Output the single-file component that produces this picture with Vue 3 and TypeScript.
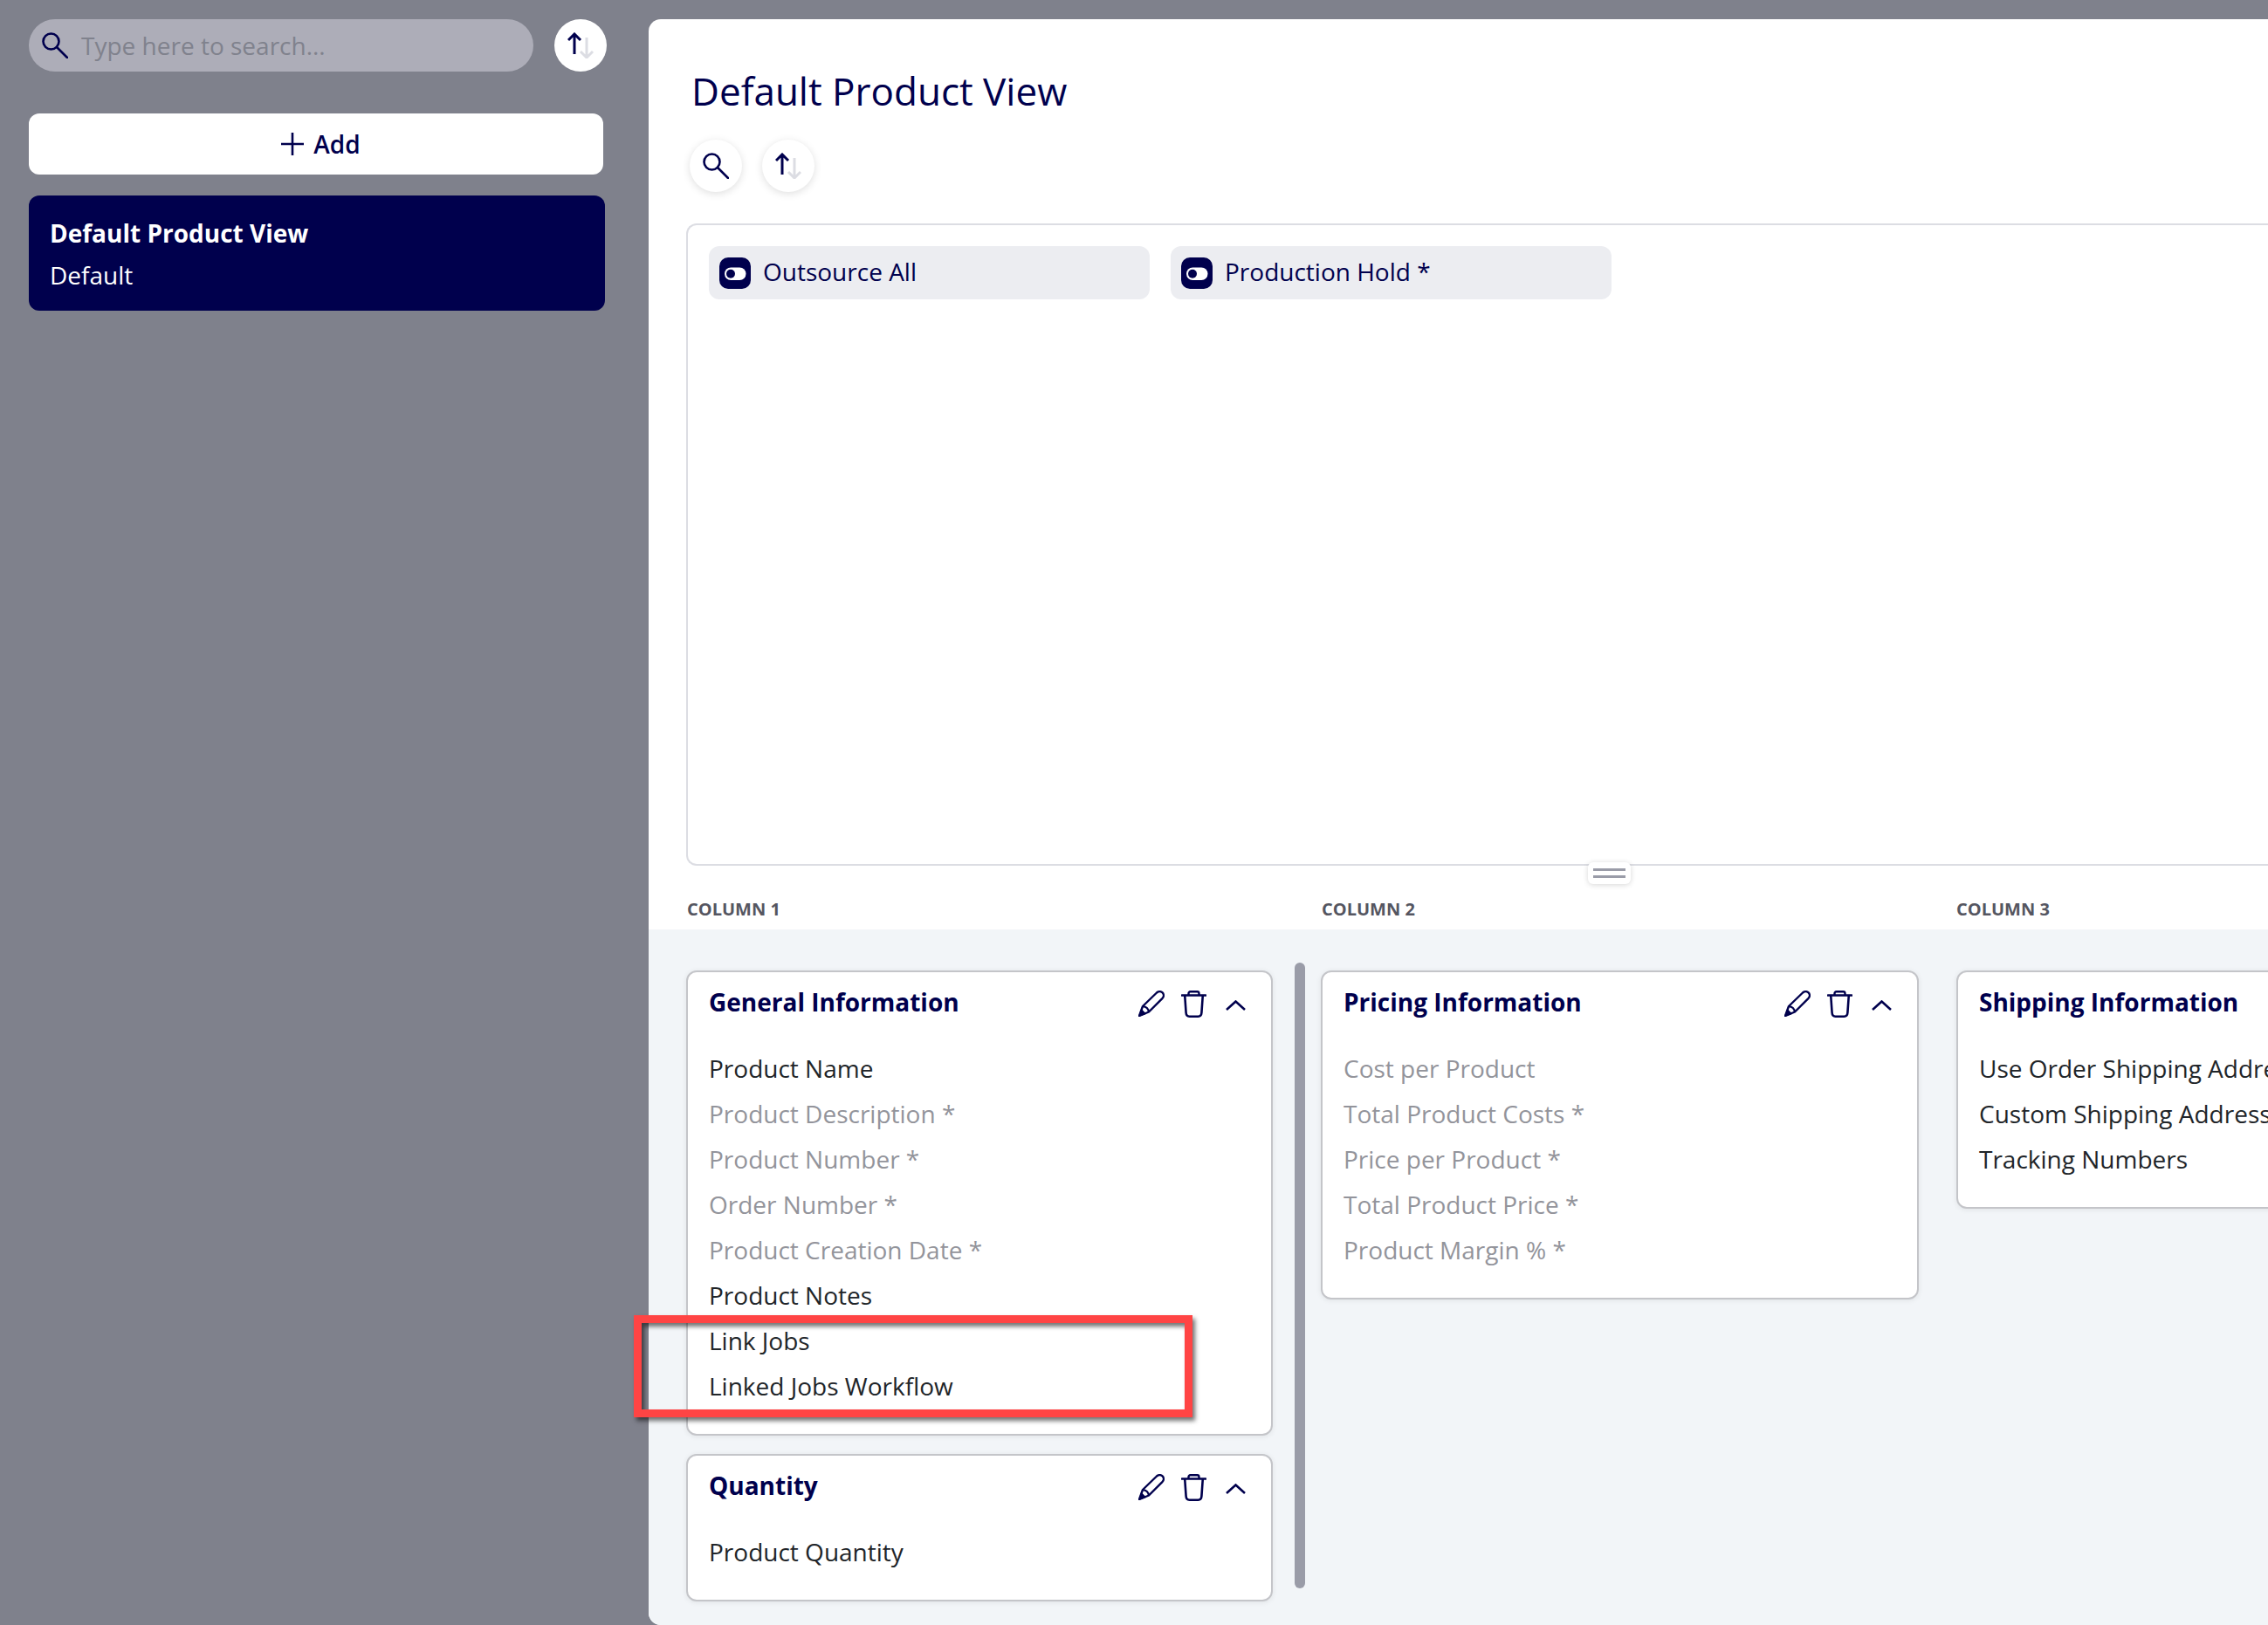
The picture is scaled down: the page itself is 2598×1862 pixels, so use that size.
<script setup lang="ts">
interface Field {
  label: string
  muted?: boolean
}

interface Section {
  title: string
  fields: Field[]
}

const toggles = ['Outsource All', 'Production Hold *']

const columns: { name: string; sections: Section[] }[] = [
  {
    name: 'COLUMN 1',
    sections: [
      {
        title: 'General Information',
        fields: [
          { label: 'Product Name' },
          { label: 'Product Description *', muted: true },
          { label: 'Product Number *', muted: true },
          { label: 'Order Number *', muted: true },
          { label: 'Product Creation Date *', muted: true },
          { label: 'Product Notes' },
          { label: 'Link Jobs' },
          { label: 'Linked Jobs Workflow' },
        ],
      },
      {
        title: 'Quantity',
        fields: [{ label: 'Product Quantity' }],
      },
    ],
  },
  {
    name: 'COLUMN 2',
    sections: [
      {
        title: 'Pricing Information',
        fields: [
          { label: 'Cost per Product', muted: true },
          { label: 'Total Product Costs *', muted: true },
          { label: 'Price per Product *', muted: true },
          { label: 'Total Product Price *', muted: true },
          { label: 'Product Margin % *', muted: true },
        ],
      },
    ],
  },
  {
    name: 'COLUMN 3',
    sections: [
      {
        title: 'Shipping Information',
        fields: [
          { label: 'Use Order Shipping Address' },
          { label: 'Custom Shipping Address' },
          { label: 'Tracking Numbers' },
        ],
      },
    ],
  },
]
</script>

<template>
  <div class="page">
    <aside class="sidebar">
      <div class="search-row">
        <div class="search">
          <svg class="search-icon" viewBox="0 0 30 30" fill="none">
            <circle cx="10.5" cy="10.5" r="9" stroke="#00004d" stroke-width="2.6" />
            <path d="M17 17 L29 29" stroke="#00004d" stroke-width="2.6" stroke-linecap="round" />
          </svg>
          <span class="search-text">Type here to search...</span>
        </div>
        <button class="round-btn">
          <svg class="sort-icon" viewBox="0 0 30 30" fill="none">
            <path d="M22 6 V29 M15 22 L22 29 L29 22" stroke="#dcdde3" stroke-width="3" />
            <path d="M8 25 V2 M1 9 L8 2 L15 9" stroke="#00004d" stroke-width="3" />
          </svg>
        </button>
      </div>
      <button class="add-btn">
        <svg class="plus" viewBox="0 0 28 28" fill="none">
          <path d="M14 1 V27 M1 14 H27" stroke="#00004d" stroke-width="2.6" />
        </svg>
        Add
      </button>
      <div class="view-card">
        <div class="view-name">Default Product View</div>
        <div class="view-sub">Default</div>
      </div>
    </aside>

    <main class="panel">
      <div class="panel-top">
        <h1 class="title">Default Product View</h1>
        <div class="tools">
          <button class="tool-btn">
            <svg class="search-icon" viewBox="0 0 30 30" fill="none">
              <circle cx="10.5" cy="10.5" r="9" stroke="#00004d" stroke-width="2.6" />
              <path d="M17 17 L29 29" stroke="#00004d" stroke-width="2.6" stroke-linecap="round" />
            </svg>
          </button>
          <button class="tool-btn">
            <svg class="sort-icon" viewBox="0 0 30 30" fill="none">
              <path d="M22 6 V29 M15 22 L22 29 L29 22" stroke="#dcdde3" stroke-width="3" />
              <path d="M8 25 V2 M1 9 L8 2 L15 9" stroke="#00004d" stroke-width="3" />
            </svg>
          </button>
        </div>
        <div class="toggle-box">
          <div v-for="t in toggles" :key="t" class="chip">
            <svg class="toggle" viewBox="0 0 36 36">
              <rect width="36" height="36" rx="10" fill="#00004d" />
              <rect x="6" y="11.5" width="24.5" height="14.5" rx="7.25" fill="#fff" />
              <circle cx="13" cy="18.7" r="5" fill="#00004d" />
            </svg>
            <span class="chip-text">{{ t }}</span>
          </div>
        </div>
        <div class="handle"><i></i><i></i></div>
      </div>

      <div class="col-labels">
        <div v-for="c in columns" :key="c.name" class="col-label">{{ c.name }}</div>
      </div>

      <div class="board">
        <div v-for="(c, i) in columns" :key="c.name" class="column" :class="`column-${i + 1}`">
          <section v-for="s in c.sections" :key="s.title" class="section">
            <header class="section-head">
              <h2>{{ s.title }}</h2>
              <div class="actions">
                <svg class="act-pen" viewBox="0 0 30 30" fill="none">
                  <path d="M1 29 L5 18 L21 2.5 C23 0.7 25.8 0.7 27.6 2.4 C29.4 4.2 29.3 7 27.6 8.8 L12 24.5 Z" stroke="#00004d" stroke-width="2.4" stroke-linejoin="round" />
                  <path d="M1 29 L3.5 22 L8 26.5 Z" fill="#00004d" stroke="#00004d" stroke-width="1.4" stroke-linejoin="round" />
                  <path d="M5 18 C8.5 18.5 11.5 21 12 24.5" stroke="#00004d" stroke-width="2.2" />
                </svg>
                <svg class="act-bin" viewBox="0 0 29 31" fill="none">
                  <path d="M1 5.5 H28" stroke="#00004d" stroke-width="2.6" stroke-linecap="round" />
                  <path d="M8.5 5.5 V3.5 C8.5 2 9.5 1.3 10.5 1.3 H18.5 C19.5 1.3 20.5 2 20.5 3.5 V5.5" stroke="#00004d" stroke-width="2.4" />
                  <path d="M4.2 5.5 L5.6 25.5 C5.8 28.4 7.3 29.7 9.5 29.7 H19.5 C21.7 29.7 23.2 28.4 23.4 25.5 L24.8 5.5" stroke="#00004d" stroke-width="2.6" />
                </svg>
                <svg class="act-chev" viewBox="0 0 23 12" fill="none">
                  <path d="M1 11 L11.5 1.5 L22 11" stroke="#00004d" stroke-width="2.6" />
                </svg>
              </div>
            </header>
            <ul class="fields">
              <li v-for="f in s.fields" :key="f.label" :class="{ muted: f.muted }">{{ f.label }}</li>
            </ul>
          </section>
        </div>
        <div class="scrollbar"></div>
      </div>
    </main>

    <div class="callout"></div>
  </div>
</template>

<style>
html,
body {
  margin: 0;
  background: #7f818c;
  overflow: hidden;
}
</style>

<style scoped>
.page {
  position: relative;
  display: flex;
  width: 2598px;
  height: 1862px;
  overflow: hidden;
  background: #7f818c;
  font-family: "Open Sans", "Noto Sans", sans-serif;
  color: #00004d;
}

button {
  border: none;
  padding: 0;
  font-family: inherit;
  color: inherit;
}

.sidebar {
  flex: 0 0 743px;
  min-width: 0;
  box-sizing: border-box;
  padding: 22px 48px 0 33px;
}

.search-row {
  display: flex;
  align-items: center;
  gap: 24px;
  margin-bottom: 48px;
}

.search {
  flex: 0 0 578px;
  height: 60px;
  box-sizing: border-box;
  display: flex;
  align-items: center;
  gap: 15px;
  padding-left: 15px;
  border-radius: 30px;
  background: #adadb8;
}

.search-icon {
  width: 30px;
  height: 30px;
}

.search-text {
  font-size: 28px;
  color: #80828d;
}

.round-btn {
  flex: none;
  width: 60px;
  height: 60px;
  border-radius: 50%;
  background: #fff;
  display: flex;
  align-items: center;
  justify-content: center;
}

.sort-icon {
  width: 30px;
  height: 30px;
}

.add-btn {
  width: 658px;
  height: 70px;
  box-sizing: border-box;
  padding-left: 10px;
  display: flex;
  align-items: center;
  justify-content: center;
  gap: 10px;
  background: #fff;
  border-radius: 12px;
  font-size: 28px;
  font-weight: 600;
  margin-bottom: 24px;
}

.plus {
  width: 28px;
  height: 28px;
}

.view-card {
  width: 660px;
  height: 132px;
  box-sizing: border-box;
  padding: 19px 24px;
  background: #00004d;
  border-radius: 12px;
  color: #fff;
  font-size: 28px;
  line-height: 48px;
}

.view-name {
  font-weight: 700;
}

.panel {
  position: relative;
  flex: 1;
  min-width: 0;
  margin-top: 22px;
  background: #fff;
  border-radius: 14px 0 0 14px;
  overflow: hidden;
  display: flex;
  flex-direction: column;
}

.panel-top {
  position: relative;
  padding: 0 0 0 43px;
}

.title {
  margin: 50px 0 0 6px;
  font-size: 44px;
  font-weight: 400;
  line-height: 64px;
}

.tools {
  display: flex;
  gap: 23px;
  margin: 24px 0 36px 4px;
}

.tool-btn {
  width: 60px;
  height: 60px;
  border-radius: 50%;
  background: #fff;
  box-shadow: 0 2px 10px rgba(0, 0, 0, 0.13);
  display: flex;
  align-items: center;
  justify-content: center;
}

.toggle-box {
  height: 736px;
  box-sizing: border-box;
  padding: 24px 24px;
  border: 2px solid #dcdde3;
  border-right: none;
  border-radius: 12px 0 0 12px;
  display: flex;
  align-items: flex-start;
  gap: 24px;
}

.chip {
  width: 505px;
  height: 61px;
  box-sizing: border-box;
  display: flex;
  align-items: center;
  gap: 14px;
  padding-left: 12px;
  background: #ecedf1;
  border-radius: 12px;
  font-size: 28px;
}

.chip-text {
  padding-bottom: 3px;
}

.toggle {
  width: 36px;
  height: 36px;
}

.handle {
  position: absolute;
  left: 1076px;
  bottom: -21px;
  width: 49px;
  height: 25px;
  display: flex;
  flex-direction: column;
  align-items: center;
  justify-content: center;
  gap: 5px;
  background: #fff;
  border-radius: 6px;
  box-shadow: 0 1px 6px rgba(0, 0, 0, 0.16);
}

.handle i {
  display: block;
  width: 37px;
  height: 3px;
  background: #9a9ca8;
}

.col-labels {
  display: flex;
  padding: 36px 0 0 44px;
  height: 37px;
  flex: none;
}

.col-label {
  flex: 0 0 727px;
  font-size: 20px;
  line-height: 28px;
  font-weight: 700;
  color: #555661;
}

.board {
  position: relative;
  flex: 1;
  display: flex;
  align-items: flex-start;
  padding: 47px 0 0 43px;
  background: #f2f5f8;
}

.column {
  flex: none;
  display: flex;
  flex-direction: column;
  gap: 21px;
}

.column-1 {
  width: 672px;
  margin-right: 55px;
}

.column-2 {
  width: 685px;
  margin-right: 43px;
}

.column-3 {
  width: 685px;
}

.section {
  box-sizing: border-box;
  background: #fff;
  border: 2px solid #c4c5c9;
  border-radius: 12px;
  padding: 0 24px 29px;
  box-shadow: 0 1px 6px rgba(0, 0, 0, 0.08);
}

.section-head {
  display: flex;
  align-items: center;
  justify-content: space-between;
  height: 72px;
  padding-bottom: 4px;
  box-sizing: border-box;
  margin-bottom: 12px;
}

.section-head h2 {
  margin: 0;
  font-size: 28px;
  font-weight: 700;
}

.actions {
  display: flex;
  align-items: center;
  gap: 19px;
  padding-right: 5px;
  margin-top: 4px;
}

.act-pen {
  width: 30px;
  height: 30px;
}

.act-bin {
  width: 29px;
  height: 31px;
}

.act-chev {
  width: 23px;
  height: 12px;
  margin-left: 3px;
  margin-top: 4px;
}

.fields {
  margin: 0;
  padding: 0;
  list-style: none;
  font-size: 28px;
  line-height: 52px;
  color: #212529;
  white-space: nowrap;
}

.fields .muted {
  color: #93949b;
}

.scrollbar {
  position: absolute;
  left: 740px;
  top: 38px;
  width: 12px;
  height: 717px;
  border-radius: 6px;
  background: #9a9ca8;
}

.callout {
  position: absolute;
  left: 726px;
  top: 1507px;
  width: 640px;
  height: 117px;
  box-sizing: border-box;
  border: 9px solid #ff4444;
  box-shadow: 3px 4px 5px rgba(0, 0, 0, 0.55), inset 3px 4px 5px rgba(0, 0, 0, 0.55);
  pointer-events: none;
}
</style>
